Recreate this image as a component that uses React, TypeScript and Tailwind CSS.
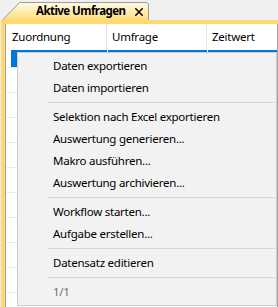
export default function App() {
  const items: (string | null)[] = [
    "Daten exportieren",
    "Daten importieren",
    null,
    "Selektion nach Excel exportieren",
    "Auswertung generieren...",
    "Makro ausführen...",
    "Auswertung archivieren...",
    null,
    "Workflow starten...",
    "Aufgabe erstellen...",
    null,
    "Datensatz editieren",
    null,
  ];
  const rows = Array.from({ length: 10 });
  return (
    <div className="relative w-[278px] h-[307px] overflow-hidden bg-[#f0f0f0] font-['Noto_Sans',sans-serif] text-[11.5px] tracking-[-0.25px] text-black">
      {/* tab strip */}
      <div className="flex h-[20px] items-end pl-[2px]">
        <div className="relative flex h-[18px] w-[147px] items-center whitespace-nowrap">
          <svg className="absolute inset-0" width="147" height="18" viewBox="0 0 147 18">
            <defs>
              <linearGradient id="tabg" x1="0" y1="0" x2="0" y2="1">
                <stop offset="0" stopColor="#fffbea" />
                <stop offset="1" stopColor="#ffde78" />
              </linearGradient>
            </defs>
            <path d="M0.5 18 L17.5 0.5 H144 Q146.5 0.5 146.5 3 V18" fill="url(#tabg)" stroke="#9c9c9c" />
          </svg>
          <span className="relative w-[120px] shrink-0 pl-[34px] text-[11.5px] font-bold leading-none tracking-[-0.55px]">Aktive Umfragen</span>
          <svg className="relative ml-[13px] mt-[1px] shrink-0" width="8" height="8" viewBox="0 0 8 8">
            <path d="M0.8 0.8 L7.2 7.2 M7.2 0.8 L0.8 7.2" stroke="#000" strokeWidth="1.5" strokeLinecap="square" />
          </svg>
        </div>
      </div>
      {/* yellow frame */}
      <div className="ml-[1px] h-[287px] bg-[#ffd870] pl-[4px] pt-[4px]">
        <div className="flex h-full flex-col border-l border-r border-[#a0a0a0] bg-white">
          {/* header */}
          <div className="flex h-[26px] shrink-0 whitespace-nowrap">
            <div className="flex w-[101px] items-center border-r border-[#e5e5e5] pl-[6px]">Zuordnung</div>
            <div className="flex w-[100px] items-center border-r border-[#e5e5e5] pl-[5px]">Umfrage</div>
            <div className="flex flex-1 items-center pl-[5px]">Zeitwert</div>
          </div>
          {/* selected row */}
          <div className="flex h-[18px] shrink-0 border-b border-[#ececec] pl-[5px]">
            <div className="w-[96px] bg-[#0078d7]" />
            <div className="w-[1px] bg-white" />
            <div className="w-[99px] bg-[#0078d7]" />
            <div className="w-[1px] bg-white" />
            <div className="flex-1 bg-[#0078d7]" />
          </div>
          {rows.map((_, i) => (
            <div key={i} className="h-[25px] shrink-0 border-b border-[#ececec]" />
          ))}
        </div>
      </div>
      {/* context menu */}
      <div className="absolute left-[17px] top-[52px] w-[260px] whitespace-nowrap border border-[#cccccc] bg-[#f2f2f2] py-[2px]">
        {items.map((it, i) =>
          it === null ? (
            <div key={i} className="flex h-[7px] items-center pl-[30px] pr-[1px]">
              <div className="h-[1px] w-full bg-[#d7d7d7]" />
            </div>
          ) : (
            <div key={i} className="flex h-[22px] items-center pl-[35px]">
              {it}
            </div>
          )
        )}
        <div className="flex h-[22px] items-center pl-[35px] text-[#6d6d6d]">1/1</div>
      </div>
    </div>
  );
}
